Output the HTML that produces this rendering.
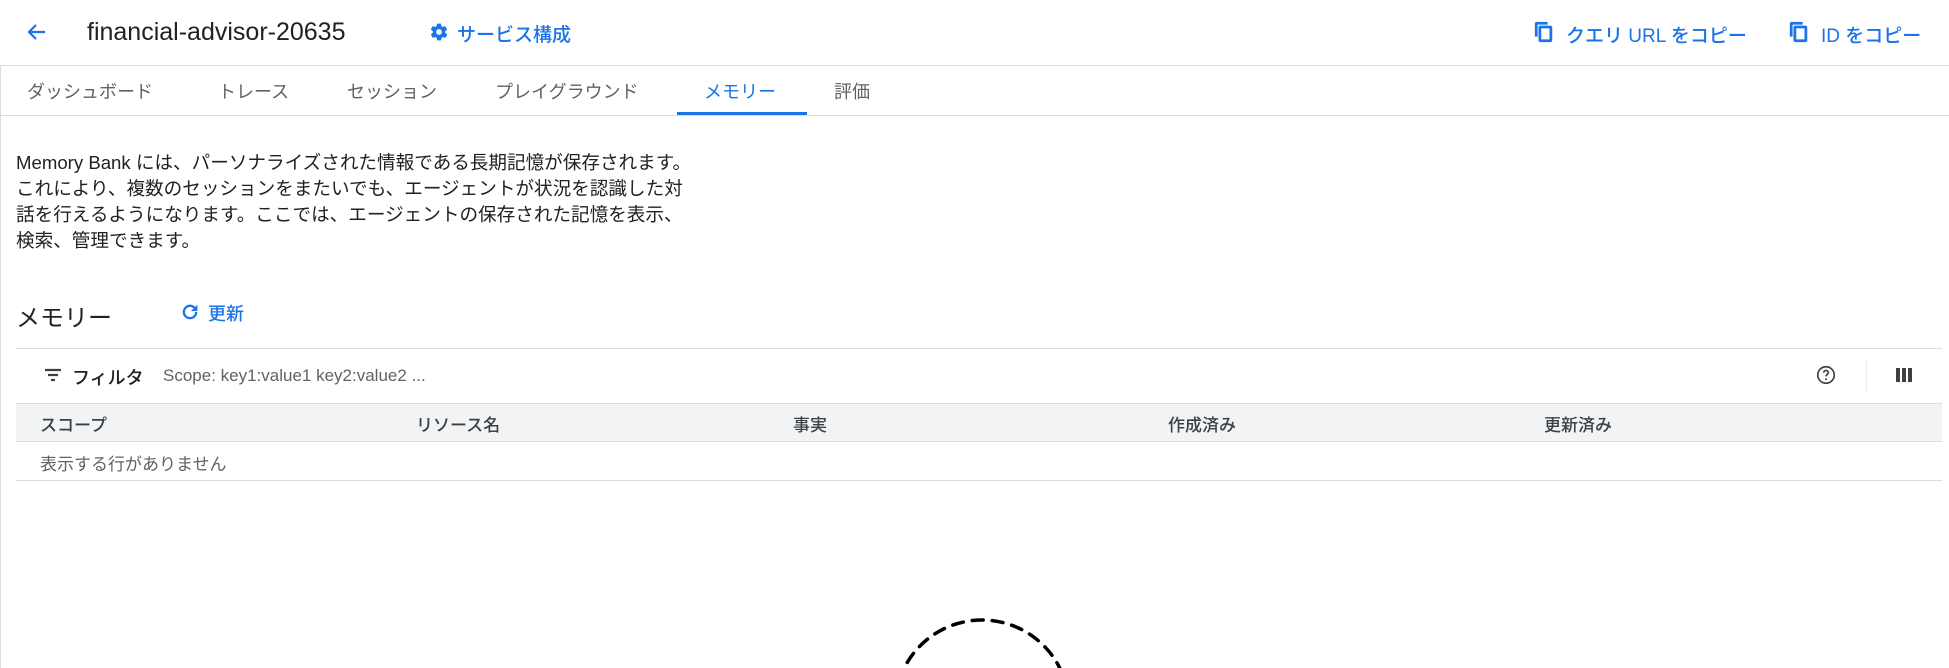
<!DOCTYPE html>
<html><head><meta charset="utf-8"><style>
*{margin:0;padding:0;box-sizing:border-box}
html,body{width:1949px;height:668px;overflow:hidden}
body{background:#fff;font-family:"Liberation Sans","Noto Sans CJK JP",sans-serif;color:#202124;position:relative}
.a{position:absolute;white-space:nowrap}
.blue{color:#1a73e8}
.line{position:absolute;background:#dadce0;height:1px}
.tab{position:absolute;top:78px;font-size:18px;color:#5f6368}
.th{position:absolute;top:411px;font-size:17px;font-weight:500;color:#3c4043}
</style></head><body>
<div style="position:absolute;left:0;top:65px;width:1px;height:603px;background:#dadce0"></div>
<svg class="a" style="left:25px;top:20px" width="24" height="24" viewBox="0 0 24 24"><path d="M20 12H5M11 5l-7 7 7 7" fill="none" stroke="#1a73e8" stroke-width="2.2"/></svg>
<div class="a" style="left:87px;top:18px;font-size:25px;color:#202124">financial-advisor-20635</div>
<svg class="a" style="left:429px;top:22px" width="20" height="20" viewBox="0 0 24 24"><path fill="#1a73e8" d="M19.4 13c.04-.3.06-.7.06-1s-.02-.7-.06-1l2.1-1.7c.2-.15.25-.4.1-.6l-2-3.5c-.12-.2-.4-.3-.6-.2l-2.5 1c-.5-.4-1.1-.7-1.7-1l-.4-2.6C14.4 2.2 14.2 2 14 2h-4c-.2 0-.4.2-.5.4l-.4 2.6c-.6.3-1.2.6-1.700 1l-2.5-1c-.2-.1-.5 0-.6.2l-2 3.5c-.1.2-.1.5.1.6L4.6 11c0 .3-.1.7-.1 1s0 .7.1 1l-2.1 1.7c-.2.15-.25.4-.1.6l2 3.5c.1.2.4.3.6.2l2.5-1c.5.4 1.1.7 1.7 1l.4 2.6c0 .2.2.4.5.4h4c.2 0 .4-.2.5-.4l.4-2.6c.6-.3 1.2-.6 1.7-1l2.5 1c.2.1.5 0 .6-.2l2-3.5c.1-.2.1-.5-.1-.6L19.4 13zM12 15.5a3.5 3.5 0 110-7 3.5 3.5 0 010 7z"/></svg>
<div class="a blue" style="left:457px;top:20px;font-size:19px;font-weight:500">サービス構成</div>
<svg class="a" style="left:1533px;top:21px" width="22" height="22" viewBox="0 0 24 24"><path fill="#1a73e8" d="M16 1H4c-1.1 0-2 .9-2 2v14h3V4h11V1zm3 4H8c-1.1 0-2 .9-2 2v14c0 1.1.9 2 2 2h11c1.1 0 2-.9 2-2V7c0-1.1-.9-2-2-2zm-1 15H9V8h9v12z"/></svg>
<div class="a blue" style="left:1566px;top:21px;font-size:19px;font-weight:500">クエリ URL をコピー</div>
<svg class="a" style="left:1788px;top:21px" width="22" height="22" viewBox="0 0 24 24"><path fill="#1a73e8" d="M16 1H4c-1.1 0-2 .9-2 2v14h3V4h11V1zm3 4H8c-1.1 0-2 .9-2 2v14c0 1.1.9 2 2 2h11c1.1 0 2-.9 2-2V7c0-1.1-.9-2-2-2zm-1 15H9V8h9v12z"/></svg>
<div class="a blue" style="left:1821px;top:21px;font-size:19px;font-weight:500">ID をコピー</div>
<div class="line" style="left:0;top:65px;width:1949px"></div>
<div class="tab" style="left:27px">ダッシュボード</div>
<div class="tab" style="left:218px">トレース</div>
<div class="tab" style="left:347px">セッション</div>
<div class="tab" style="left:495px">プレイグラウンド</div>
<div class="tab" style="left:704px;color:#1a73e8">メモリー</div>
<div class="tab" style="left:834px">評価</div>
<div style="position:absolute;left:677px;top:112px;width:130px;height:3px;background:#1a73e8"></div>
<div class="line" style="left:0;top:115px;width:1949px"></div>
<div class="a" style="left:16px;top:150px;font-size:18.6px;line-height:26px;color:#202124">Memory Bank には、パーソナライズされた情報である長期記憶が保存されます。<br>これにより、複数のセッションをまたいでも、エージェントが状況を認識した対<br>話を行えるようになります。ここでは、エージェントの保存された記憶を表示、<br>検索、管理できます。</div>
<div class="a" style="left:16px;top:298px;font-size:24px">メモリー</div>
<svg class="a" style="left:179px;top:301px" width="22" height="22" viewBox="0 0 24 24"><path fill="#1a73e8" d="M17.65 6.35A7.96 7.96 0 0012 4a8 8 0 108 8h-2.5a5.5 5.5 0 11-1.6-3.9L13 11h7V4l-2.35 2.35z"/></svg>
<div class="a blue" style="left:208px;top:300px;font-size:18px;font-weight:500">更新</div>
<div class="line" style="left:16px;top:348px;width:1926px"></div>
<svg class="a" style="left:43px;top:366px" width="20" height="18" viewBox="0 0 20 18"><path d="M2 4h16M5 9h10M8 14h4" stroke="#3c4043" stroke-width="2.2"/></svg>
<div class="a" style="left:72px;top:364px;font-size:18px;font-weight:500;color:#202124">フィルタ</div>
<div class="a" style="left:163px;top:366px;font-size:17px;color:#5f6368">Scope: key1:value1 key2:value2 ...</div>
<svg class="a" style="left:1815px;top:364px" width="22" height="22" viewBox="0 0 24 24"><circle cx="12" cy="12" r="9" fill="none" stroke="#3c4043" stroke-width="1.8"/><path d="M9.5 9.5a2.5 2.5 0 115 0c0 1.8-2.5 2-2.5 4" fill="none" stroke="#3c4043" stroke-width="1.8"/><circle cx="12" cy="16.6" r="1.1" fill="#3c4043"/></svg>
<div style="position:absolute;left:1866px;top:360px;width:1px;height:32px;background:#e8eaed"></div>
<svg class="a" style="left:1895px;top:367px" width="18" height="16" viewBox="0 0 18 16"><rect x="1" y="1" width="4" height="14" fill="#3c4043"/><rect x="7" y="1" width="4" height="14" fill="#3c4043"/><rect x="13" y="1" width="4" height="14" fill="#3c4043"/></svg>
<div style="position:absolute;left:16px;top:403px;width:1926px;height:39px;background:#f1f3f4;border-top:1px solid #dadce0;border-bottom:1px solid #dadce0"></div>
<div class="th" style="left:40px">スコープ</div>
<div class="th" style="left:416px">リソース名</div>
<div class="th" style="left:793px">事実</div>
<div class="th" style="left:1168px">作成済み</div>
<div class="th" style="left:1544px">更新済み</div>
<div class="a" style="left:40px;top:450px;font-size:17px;color:#5f6368">表示する行がありません</div>
<div class="line" style="left:16px;top:480px;width:1926px"></div>
<svg class="a" style="left:0;top:580px" width="1949" height="88"><circle cx="982" cy="127" r="87" fill="none" stroke="#000" stroke-width="3.5" stroke-dasharray="11 9" stroke-linecap="round"/></svg>
</body></html>
